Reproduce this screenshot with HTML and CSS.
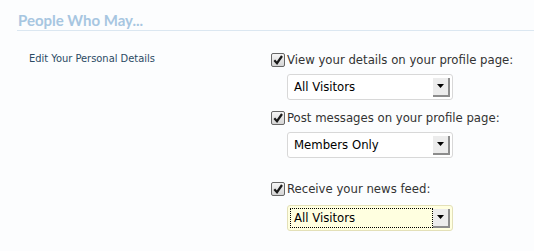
FILE: index.html
```html
<!DOCTYPE html>
<html>
<head>
<meta charset="utf-8">
<link rel="stylesheet" href="styles.css">
</head>
<body>
<div class="page">
  <h2 class="heading">People Who May...</h2>
  <div class="row">
    <div class="label">Edit Your Personal Details</div>
    <div class="controls">
      <label class="check"><span class="box"><svg viewBox="0 0 12 12" width="12" height="12"><path d="M2.3 6.2 L5 9.2 L10 2" fill="none" stroke="#1a1a1a" stroke-width="2.2"/></svg></span>View your details on your profile page:</label>
      <div class="select"><span class="val">All Visitors</span><span class="btn"><svg viewBox="0 0 7 4" width="7" height="4"><path d="M0 0H7L3.5 4Z" fill="#000"/></svg></span></div>
      <label class="check"><span class="box"><svg viewBox="0 0 12 12" width="12" height="12"><path d="M2.3 6.2 L5 9.2 L10 2" fill="none" stroke="#1a1a1a" stroke-width="2.2"/></svg></span>Post messages on your profile page:</label>
      <div class="select"><span class="val">Members Only</span><span class="btn"><svg viewBox="0 0 7 4" width="7" height="4"><path d="M0 0H7L3.5 4Z" fill="#000"/></svg></span></div>
      <label class="check gap"><span class="box"><svg viewBox="0 0 12 12" width="12" height="12"><path d="M2.3 6.2 L5 9.2 L10 2" fill="none" stroke="#1a1a1a" stroke-width="2.2"/></svg></span>Receive your news feed:</label>
      <div class="select focus"><span class="val">All Visitors</span><span class="btn"><svg viewBox="0 0 7 4" width="7" height="4"><path d="M0 0H7L3.5 4Z" fill="#000"/></svg></span></div>
    </div>
  </div>
</div>
</body>
</html>
```

FILE: styles.css
```css
html, body {
  margin: 0;
  padding: 0;
  background: #fcfdfe;
}
.page {
  padding: 10px 0 0 17px;
  font-family: "DejaVu Sans Condensed", "DejaVu Sans", sans-serif;
}
.heading {
  margin: 0;
  font-family: Lato, "Liberation Sans", sans-serif;
  font-size: 15px;
  font-weight: bold;
  color: #a7c6e1;
  line-height: 20px;
  padding-left: 1px;
  border-bottom: 1px solid #dbe7f1;
  height: 20px;
}
.row {
  display: flex;
  padding-top: 20px;
}
.label {
  width: 242px;
  padding-left: 12px;
  font-size: 11px;
  color: #2b4a64;
  line-height: 14px;
  padding-top: 1px;
}
.controls {
  display: flex;
  flex-direction: column;
  align-items: flex-start;
}
.check {
  display: flex;
  align-items: center;
  font-size: 13px;
  color: #333;
  line-height: 16px;
  height: 18px;
}
.check.gap {
  margin-top: 13px;
}
.box {
  width: 12px;
  height: 12px;
  border: 1px solid #666;
  border-radius: 2px;
  background: linear-gradient(#f6f6f6, #d4d4d4);
  margin-right: 2px;
  display: flex;
  align-items: center;
  justify-content: center;
}
.box svg {
  display: block;
}
.select {
  margin: 5px 0 9px 16px;
  width: 164px;
  height: 24px;
  border: 1px solid #d8d8d8;
  border-radius: 3px;
  background: #fff;
  display: flex;
  align-items: center;
  justify-content: space-between;
  box-sizing: content-box;
}
.val {
  font-size: 13px;
  color: #000;
  padding-left: 6px;
  line-height: 16px;
}
.btn {
  width: 15px;
  height: 17px;
  margin-right: 2px;
  background: #ececec;
  border-right: 2px solid #8c8c8c;
  border-bottom: 2px solid #8c8c8c;
  display: flex;
  align-items: center;
  justify-content: center;
}
.btn svg {
  display: block;
}
.select.focus {
  margin-top: 7px;
  background: #ffffe0;
  border-color: #e3e0b8;
}
.select.focus .val {
  margin-left: 2px;
  padding-left: 3px;
  width: 140px;
  border: 1px dotted #000;
  line-height: 18px;
}
```
